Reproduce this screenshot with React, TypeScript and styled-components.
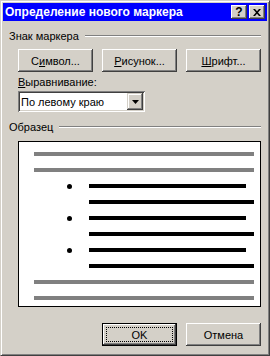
import React from 'react';
import styled, { createGlobalStyle } from 'styled-components';

const GlobalStyle = createGlobalStyle`
  html, body {
    margin: 0;
    padding: 0;
    background: #d4d0c8;
  }
  body {
    font-family: "Liberation Sans", Arial, sans-serif;
    font-size: 11px;
    color: #000;
  }
`;

const Window = styled.div`
  box-sizing: border-box;
  width: 270px;
  height: 356px;
  background: #d4d0c8;
  border: 1px solid;
  border-color: #d4d0c8 #404040 #404040 #d4d0c8;
  box-shadow: inset 1px 1px #fff, inset -1px -1px #808080;
  padding: 2px;
  display: flex;
  flex-direction: column;
`;

const TitleBar = styled.div`
  height: 18px;
  background: #0000ff;
  display: flex;
  align-items: center;
  padding: 0 2px 0 2px;
`;

const Title = styled.div`
  flex: 1;
  color: #fff;
  font-weight: bold;
  font-size: 12px;
  white-space: nowrap;
`;

const CaptionButton = styled.div<{ $gap?: boolean }>`
  box-sizing: border-box;
  width: 16px;
  height: 14px;
  margin-left: ${({ $gap }) => ($gap ? '2px' : '0')};
  background: #d4d0c8;
  box-shadow: inset -1px -1px #404040, inset 1px 1px #fff,
    inset -2px -2px #808080, inset 2px 2px #d4d0c8;
  display: flex;
  align-items: center;
  justify-content: center;
  font-weight: bold;
  font-size: 12px;
  line-height: 14px;
`;

const Body = styled.div`
  display: flex;
  flex-direction: column;
  padding: 8px 6px 0 6px;
`;

const GroupHeader = styled.div`
  height: 14px;
  display: flex;
  align-items: center;
  gap: 6px;
`;

const GroupRule = styled.div`
  flex: 1;
  height: 0;
  border-top: 1px solid #808080;
  border-bottom: 1px solid #fff;
`;

const GroupContent = styled.div`
  padding-left: 9px;
  display: flex;
  flex-direction: column;
`;

const ButtonRow = styled.div`
  display: flex;
  gap: 9px;
  margin-top: 6px;
`;

const Button = styled.div<{ $default?: boolean }>`
  box-sizing: border-box;
  position: relative;
  width: 75px;
  height: 23px;
  background: #d4d0c8;
  display: flex;
  align-items: center;
  justify-content: center;
  box-shadow: ${({ $default }) => ($default
    ? 'inset 0 0 0 1px #000, inset -2px -2px #404040, inset 2px 2px #fff, inset -3px -3px #808080'
    : 'inset -1px -1px #404040, inset 1px 1px #fff, inset -2px -2px #808080, inset 2px 2px #d4d0c8')};
`;

const FocusRect = styled.div`
  position: absolute;
  inset: 4px;
  border: 1px dotted #000;
`;

const Key = styled.span`
  text-decoration: underline;
`;

const FieldLabel = styled.div`
  margin-top: 4px;
  height: 13px;
  line-height: 13px;
`;

const Select = styled.div`
  box-sizing: border-box;
  margin-top: 2px;
  width: 127px;
  height: 21px;
  background: #fff;
  box-shadow: inset 1px 1px #808080, inset -1px -1px #fff,
    inset 2px 2px #404040, inset -2px -2px #d4d0c8;
  display: flex;
  align-items: center;
  padding: 2px 2px 2px 3px;
`;

const SelectValue = styled.div`
  flex: 1;
`;

const DropButton = styled.div`
  box-sizing: border-box;
  width: 16px;
  height: 17px;
  background: #d4d0c8;
  box-shadow: inset -1px -1px #404040, inset 1px 1px #d4d0c8,
    inset -2px -2px #808080, inset 2px 2px #fff;
  display: flex;
  align-items: center;
  justify-content: center;
`;

const SampleHeader = styled(GroupHeader)`
  margin-top: 8px;
`;

const Preview = styled.div`
  box-sizing: border-box;
  margin-top: 7px;
  width: 243px;
  height: 166px;
  background: #fff;
  border: 1px solid #000;
  padding: 10px 6px 0 15px;
  display: flex;
  flex-direction: column;
  gap: 12px;
`;

const GrayBar = styled.div`
  height: 4px;
  background: #808080;
`;

const ListRow = styled.div<{ $short?: boolean }>`
  height: 4px;
  display: flex;
  align-items: center;
  padding-right: ${({ $short }) => ($short ? '8px' : '0')};
`;

const BulletCell = styled.div`
  width: 55px;
  display: flex;
  align-items: center;
  padding-left: 33px;
  box-sizing: border-box;
`;

const Dot = styled.div`
  width: 5px;
  height: 5px;
  border-radius: 50%;
  background: #000;
`;

const BlackBar = styled.div`
  flex: 1;
  height: 4px;
  background: #000;
`;

const Footer = styled.div`
  display: flex;
  justify-content: flex-end;
  gap: 9px;
  margin-top: 16px;
`;

const items = [0, 1, 2];

export default function App() {
  return (
    <>
      <GlobalStyle />
      <Window>
        <TitleBar>
          <Title>Определение нового маркера</Title>
          <CaptionButton>?</CaptionButton>
          <CaptionButton $gap>
            <svg width="8" height="7" viewBox="0 0 8 7">
              <path d="M0 0h2l2 2.2L6 0h2L5 3.5 8 7H6L4 4.8 2 7H0l3-3.5z" fill="#000" />
            </svg>
          </CaptionButton>
        </TitleBar>
        <Body>
          <GroupHeader>
            <span>Знак маркера</span>
            <GroupRule />
          </GroupHeader>
          <GroupContent>
            <ButtonRow>
              <Button>С<Key>и</Key>мвол...</Button>
              <Button><Key>Р</Key>исунок...</Button>
              <Button><Key>Ш</Key>рифт...</Button>
            </ButtonRow>
            <FieldLabel><Key>В</Key>ыравнивание:</FieldLabel>
            <Select>
              <SelectValue>По левому краю</SelectValue>
              <DropButton>
                <svg width="7" height="4" viewBox="0 0 7 4">
                  <path d="M0 0h7L3.5 4z" fill="#000" />
                </svg>
              </DropButton>
            </Select>
          </GroupContent>
          <SampleHeader>
            <span>Образец</span>
            <GroupRule />
          </SampleHeader>
          <GroupContent>
            <Preview>
              <GrayBar />
              <GrayBar />
              {items.map((i) => (
                <React.Fragment key={i}>
                  <ListRow $short>
                    <BulletCell><Dot /></BulletCell>
                    <BlackBar />
                  </ListRow>
                  <ListRow>
                    <BulletCell />
                    <BlackBar />
                  </ListRow>
                </React.Fragment>
              ))}
              <GrayBar />
              <GrayBar />
            </Preview>
          </GroupContent>
          <Footer>
            <Button $default>
              OK
              <FocusRect />
            </Button>
            <Button>Отмена</Button>
          </Footer>
        </Body>
      </Window>
    </>
  );
}
